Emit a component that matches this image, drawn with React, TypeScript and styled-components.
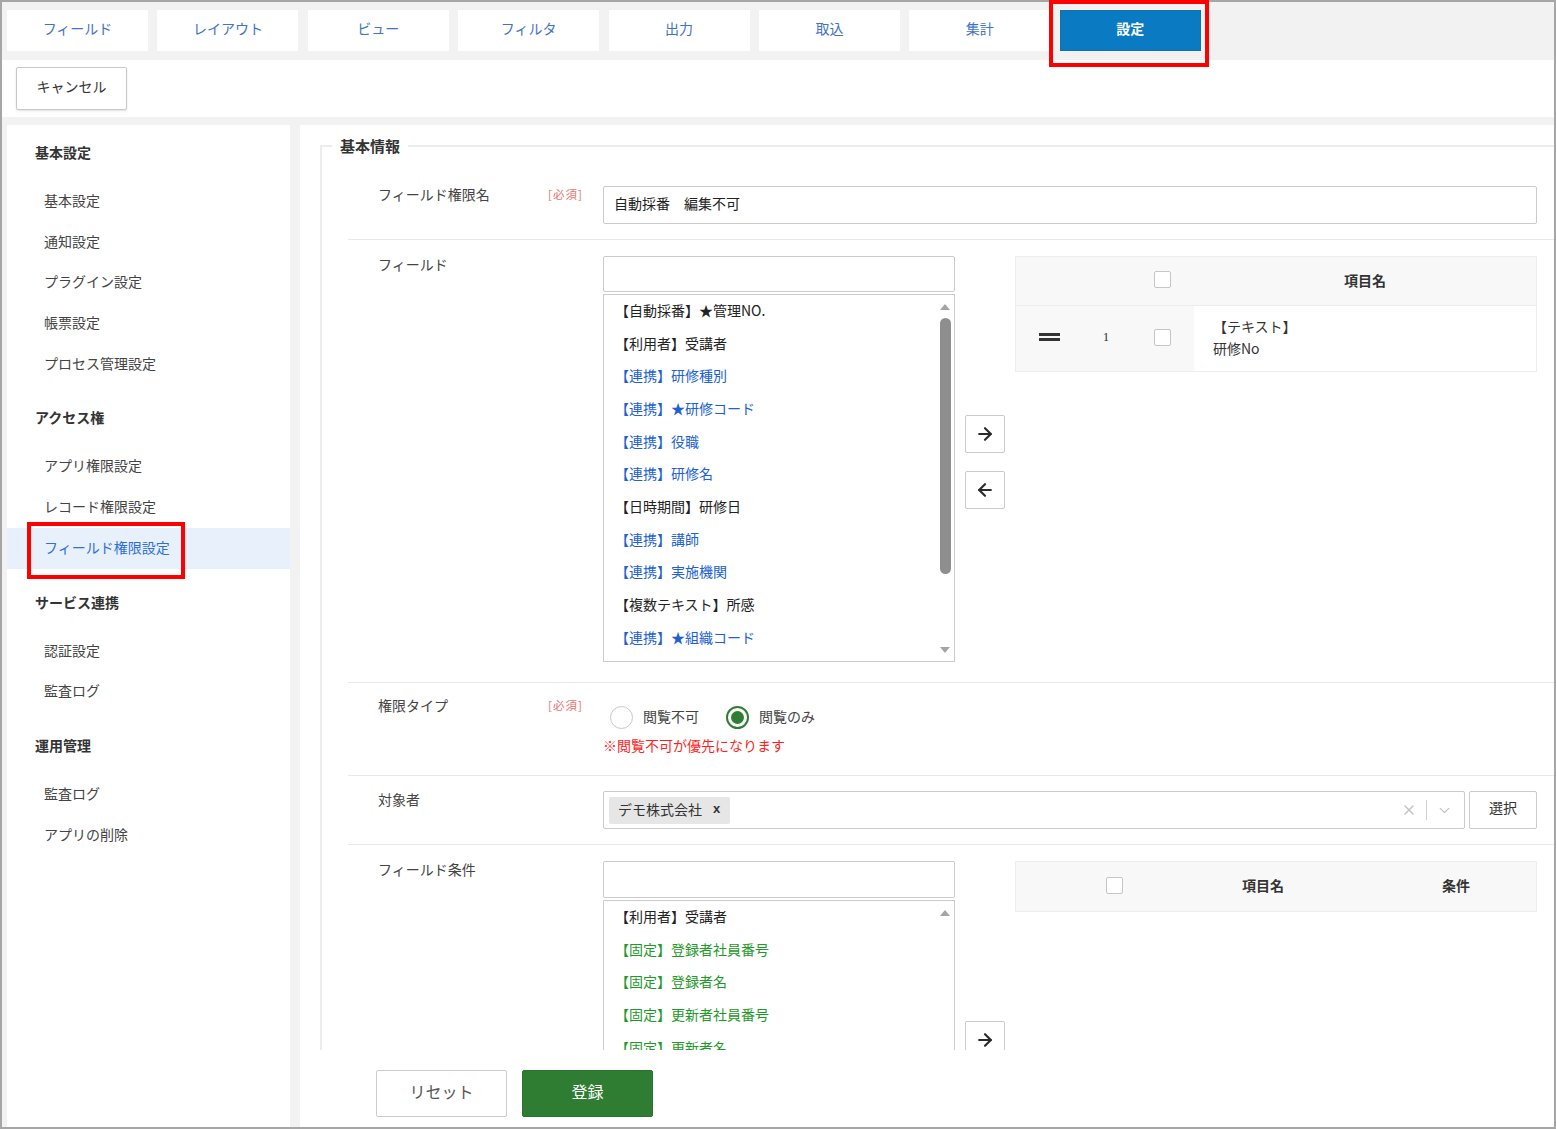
import React from "react";
import styled, { createGlobalStyle } from "styled-components";
import { ArrowRight, ArrowLeft, X, ChevronDown } from "lucide-react";

const GlobalStyle = createGlobalStyle`
  html, body {
    margin: 0;
    padding: 0;
    background: #fff;
    overflow: hidden;
  }
  body {
    font-family: "Noto Sans CJK JP", "Noto Sans", sans-serif;
    font-size: 14px;
    color: #333;
  }
  * {
    box-sizing: border-box;
  }
`;

const Frame = styled.div`
  width: 1556px;
  height: 1129px;
  border: 2px solid #a6a6a6;
  background: #f2f2f2;
  display: flex;
  flex-direction: column;
  position: relative;
`;

/* ---------- top tabs ---------- */

const TabBar = styled.nav`
  height: 58px;
  flex-shrink: 0;
  display: flex;
  align-items: flex-start;
  gap: 9.4px;
  padding: 8px 5px 0;
`;

const Tab = styled.div<{ $active?: boolean }>`
  position: relative;
  width: 141px;
  height: 41px;
  display: flex;
  align-items: center;
  justify-content: center;
  padding-bottom: 6px;
  font-size: 14px;
  background: ${(p) => (p.$active ? "#0a7ac2" : "#fff")};
  color: ${(p) => (p.$active ? "#fff" : "#3f73c6")};
  font-weight: ${(p) => (p.$active ? 700 : 400)};
  border: 1px solid ${(p) => (p.$active ? "#1770ad" : "#fff")};
`;

const TabMark = styled.span`
  position: absolute;
  left: -12px;
  top: -11px;
  width: 160px;
  height: 67px;
  border: 4px solid #ff0000;
  pointer-events: none;
`;

const ActionBar = styled.div`
  height: 57px;
  flex-shrink: 0;
  background: #fff;
  padding: 7px 0 0 14px;
`;

const CancelButton = styled.button`
  width: 111px;
  height: 43px;
  padding: 0 0 5px;
  border: 1px solid #c9c9c9;
  border-radius: 2px;
  background: #fff;
  font-family: inherit;
  font-size: 14px;
  color: #333;
  box-shadow: 0 1px 2px rgba(0, 0, 0, 0.12);
`;

/* ---------- body ---------- */

const Body = styled.div`
  flex: 1;
  min-height: 0;
  display: flex;
  gap: 10px;
  padding: 8px 0 0 5px;
`;

const Sidebar = styled.aside`
  width: 283px;
  flex-shrink: 0;
  background: #fff;
  padding-top: 7px;
`;

const SideGroup = styled.section`
  margin-bottom: 13px;
`;

const SideHeading = styled.h3`
  margin: 0 0 9px;
  height: 40px;
  line-height: 40px;
  padding-left: 28px;
  font-size: 14px;
  font-weight: 700;
  color: #333;
`;

const SideItem = styled.div<{ $active?: boolean }>`
  position: relative;
  height: 40.7px;
  line-height: 39px;
  padding-left: 37px;
  font-size: 14px;
  color: ${(p) => (p.$active ? "#2f6fd8" : "#444")};
  background: ${(p) => (p.$active ? "#e8f0fc" : "transparent")};
`;

const SideMark = styled.span`
  position: absolute;
  left: 20px;
  top: -6px;
  width: 158px;
  height: 57px;
  border: 4px solid #ff0000;
  pointer-events: none;
`;

const Main = styled.main`
  flex: 1;
  min-width: 0;
  background: #fff;
  display: flex;
  flex-direction: column;
`;

const Scroll = styled.div`
  height: 925px;
  flex-shrink: 0;
  overflow: hidden;
  padding: 11px 0 0 20px;
`;

const Fieldset = styled.fieldset`
  margin: 0;
  padding: 0;
  min-width: 0;
  border: 2px solid #ececec;
  border-right: none;
  border-bottom: none;
`;

const Legend = styled.legend`
  margin-left: 10px;
  padding: 0 8px;
  font-size: 15px;
  line-height: 20px;
  font-weight: 700;
  color: #333;
`;

const Rows = styled.div`
  padding-top: 14px;
`;

const Row = styled.div<{ $pt?: number; $pb?: number }>`
  display: grid;
  grid-template-columns: 170px 55px 1fr;
  margin-left: 26px;
  padding: ${(p) => p.$pt ?? 16}px 17px ${(p) => p.$pb ?? 15}px 30px;
  border-bottom: 1px solid #e8e8e8;
`;

const Label = styled.div`
  margin-top: -2px;
  line-height: 20px;
  font-size: 14px;
  color: #444;
`;

const Required = styled.div`
  margin-top: -2px;
  line-height: 20px;
  font-size: 11.5px;
  letter-spacing: 1px;
  color: #e27575;
`;

const Control = styled.div`
  min-width: 0;
`;

const TextInput = styled.div`
  height: 38px;
  border: 1px solid #cbcbcb;
  border-radius: 2px;
  display: flex;
  align-items: center;
  padding: 0 0 4px 10px;
  font-size: 14px;
  color: #222;
`;

/* ---------- transfer list ---------- */

const Transfer = styled.div`
  display: flex;
  align-items: stretch;
`;

const Picker = styled.div`
  width: 352px;
  flex-shrink: 0;
  display: flex;
  flex-direction: column;
  gap: 2px;
`;

const SearchBox = styled.div<{ $h?: number }>`
  height: ${(p) => p.$h ?? 36}px;
  border: 1px solid #cbcbcb;
  border-radius: 2px;
`;

const ListBox = styled.div`
  height: 368px;
  border: 1px solid #cbcbcb;
  display: flex;
`;

const ListItems = styled.ul`
  flex: 1;
  margin: 0;
  padding: 0 0 0 11px;
  list-style: none;
  overflow: hidden;
`;

const toneColor: Record<string, string> = {
  plain: "#222",
  link: "#2060d2",
  fixed: "#1e9a2a",
};

const ListItem = styled.li<{ $tone: string }>`
  height: 32.7px;
  display: flex;
  align-items: center;
  padding-bottom: 3px;
  white-space: nowrap;
  font-size: 14px;
  color: ${(p) => toneColor[p.$tone]};
`;

const Track = styled.div`
  width: 18px;
  display: flex;
  flex-direction: column;
  align-items: center;
  padding: 9px 0 8px;
`;

const TriUp = styled.span`
  width: 0;
  height: 0;
  border-left: 5.5px solid transparent;
  border-right: 5.5px solid transparent;
  border-bottom: 6px solid #a5a5a5;
`;

const TriDown = styled.span`
  margin-top: auto;
  width: 0;
  height: 0;
  border-left: 5.5px solid transparent;
  border-right: 5.5px solid transparent;
  border-top: 6px solid #a5a5a5;
`;

const Thumb = styled.span<{ $top: number }>`
  margin-top: ${(p) => p.$top}px;
  width: 11px;
  height: 256px;
  border-radius: 6px;
  background: #8e8e8e;
`;

const Shuttle = styled.div`
  width: 40px;
  margin-left: 10px;
  flex-shrink: 0;
  display: flex;
  flex-direction: column;
  justify-content: center;
  gap: 18px;
  padding-top: 6px;
`;

const ShuttleButton = styled.button`
  width: 40px;
  height: 38px;
  border: 1px solid #cbcbcb;
  border-radius: 2px;
  background: #fff;
  display: flex;
  align-items: center;
  justify-content: center;
  padding: 0;
  color: #2b2b2b;
`;

const Grid = styled.div`
  flex: 1;
  margin-left: 10px;
  align-self: flex-start;
  border: 1px solid #ededed;
`;

const GridRow = styled.div<{ $cols: string; $h: number; $head?: boolean }>`
  display: grid;
  grid-template-columns: ${(p) => p.$cols};
  height: ${(p) => p.$h}px;
  background: #f8f8f8;
  font-weight: ${(p) => (p.$head ? 700 : 400)};
  & + & {
    border-top: 1px solid #ededed;
  }
`;

const Cell = styled.div<{ $white?: boolean; $left?: boolean }>`
  display: flex;
  flex-direction: column;
  align-items: ${(p) => (p.$left ? "flex-start" : "center")};
  justify-content: center;
  padding: 0 0 ${(p) => (p.$left ? "4px" : "3px")} ${(p) => (p.$left ? "19px" : "0")};
  background: ${(p) => (p.$white ? "#fff" : "transparent")};
  font-size: 14px;
  line-height: 22px;
  color: #333;
`;

const Check = styled.span`
  width: 17px;
  height: 17px;
  border: 1px solid #c6c6c6;
  border-radius: 2px;
  background: #fff;
`;

const RowNo = styled.span`
  font-family: "Liberation Serif", serif;
  font-size: 13px;
  color: #333;
`;

/* ---------- radio ---------- */

const RadioGroup = styled.div`
  display: flex;
  align-items: center;
  height: 24px;
  margin-top: 8px;
  padding-left: 7px;
`;

const RadioOption = styled.label`
  display: flex;
  align-items: center;
  gap: 10px;
  margin-right: 27px;
  font-size: 14px;
  color: #444;
  line-height: 20px;
`;

const RadioText = styled.span`
  margin-top: -3px;
`;

const RadioCircle = styled.span<{ $checked?: boolean }>`
  width: 23px;
  height: 23px;
  border-radius: 50%;
  border: ${(p) => (p.$checked ? "2px solid #2e7d32" : "1px solid #c8c8c8")};
  background: #fff;
  display: flex;
  align-items: center;
  justify-content: center;
  &::after {
    content: "";
    display: ${(p) => (p.$checked ? "block" : "none")};
    width: 13px;
    height: 13px;
    border-radius: 50%;
    background: #2e7d32;
  }
`;

const Note = styled.div`
  margin: 6px 0 2px;
  line-height: 20px;
  font-size: 14px;
  color: #ff1f1f;
`;

/* ---------- select ---------- */

const SelectRow = styled.div`
  display: flex;
  gap: 4px;
`;

const MultiSelect = styled.div`
  flex: 1;
  height: 38px;
  border: 1px solid #cbcbcb;
  border-radius: 2px;
  display: flex;
  align-items: center;
  padding: 0 11px 0 5px;
`;

const Chip = styled.span`
  height: 27px;
  display: flex;
  align-items: center;
  gap: 11px;
  padding: 0 10px 3px 9px;
  border-radius: 2px;
  background: #e6e6e6;
  font-size: 14px;
  color: #333;
`;

const ChipClose = styled.span`
  font-family: "Liberation Sans", sans-serif;
  font-size: 13px;
  font-weight: 700;
  color: #333;
`;

const Indicators = styled.div`
  margin-left: auto;
  display: flex;
  align-items: center;
  gap: 9px;
  color: #c2c2c2;
`;

const Separator = styled.span`
  width: 1px;
  height: 20px;
  background: #d0d0d0;
`;

const PlainButton = styled.button`
  width: 68px;
  height: 38px;
  padding: 0 0 6px;
  border: 1px solid #cbcbcb;
  border-radius: 2px;
  background: #fff;
  font-family: inherit;
  font-size: 14px;
  color: #333;
`;

/* ---------- footer ---------- */

const Footer = styled.div`
  flex: 1;
  display: flex;
  align-items: flex-start;
  gap: 15px;
  padding: 20px 0 0 76px;
`;

const FooterButton = styled.button<{ $primary?: boolean }>`
  width: 131px;
  height: 47px;
  padding: 0 0 5px;
  border-radius: 2px;
  font-family: inherit;
  font-size: 16px;
  border: 1px solid ${(p) => (p.$primary ? "#2a7430" : "#cccccc")};
  background: ${(p) => (p.$primary ? "#2e7d32" : "#fff")};
  color: ${(p) => (p.$primary ? "#fff" : "#555")};
`;

/* ---------- data ---------- */

const tabs = ["フィールド", "レイアウト", "ビュー", "フィルタ", "出力", "取込", "集計", "設定"];

const groups = [
  { title: "基本設定", items: ["基本設定", "通知設定", "プラグイン設定", "帳票設定", "プロセス管理設定"] },
  { title: "アクセス権", items: ["アプリ権限設定", "レコード権限設定", "フィールド権限設定"] },
  { title: "サービス連携", items: ["認証設定", "監査ログ"] },
  { title: "運用管理", items: ["監査ログ", "アプリの削除"] },
];

const fieldItems: [string, string][] = [
  ["【自動採番】★管理NO.", "plain"],
  ["【利用者】受講者", "plain"],
  ["【連携】研修種別", "link"],
  ["【連携】★研修コード", "link"],
  ["【連携】役職", "link"],
  ["【連携】研修名", "link"],
  ["【日時期間】研修日", "plain"],
  ["【連携】講師", "link"],
  ["【連携】実施機関", "link"],
  ["【複数テキスト】所感", "plain"],
  ["【連携】★組織コード", "link"],
];

const conditionItems: [string, string][] = [
  ["【利用者】受講者", "plain"],
  ["【固定】登録者社員番号", "fixed"],
  ["【固定】登録者名", "fixed"],
  ["【固定】更新者社員番号", "fixed"],
  ["【固定】更新者名", "fixed"],
];

const HandleIcon = () => (
  <svg width="21" height="10" viewBox="0 0 21 10">
    <rect x="0" y="1" width="21" height="3" fill="#333" />
    <rect x="0" y="6" width="21" height="3" fill="#333" />
  </svg>
);

const PickList = ({
  items,
  searchHeight,
  thumbTop,
}: {
  items: [string, string][];
  searchHeight?: number;
  thumbTop: number;
}) => (
  <Picker>
    <SearchBox $h={searchHeight} />
    <ListBox>
      <ListItems>
        {items.map(([text, tone]) => (
          <ListItem key={text} $tone={tone}>
            {text}
          </ListItem>
        ))}
      </ListItems>
      <Track>
        <TriUp />
        <Thumb $top={thumbTop} />
        <TriDown />
      </Track>
    </ListBox>
  </Picker>
);

const App: React.FC = () => {
  return (
    <>
      <GlobalStyle />
      <Frame>
        <TabBar>
          {tabs.map((t) => (
            <Tab key={t} $active={t === "設定"}>
              {t}
              {t === "設定" && <TabMark />}
            </Tab>
          ))}
        </TabBar>

        <ActionBar>
          <CancelButton>キャンセル</CancelButton>
        </ActionBar>

        <Body>
          <Sidebar>
            {groups.map((g) => (
              <SideGroup key={g.title}>
                <SideHeading>{g.title}</SideHeading>
                {g.items.map((item) => {
                  const active = item === "フィールド権限設定";
                  return (
                    <SideItem key={item} $active={active}>
                      {item}
                      {active && <SideMark />}
                    </SideItem>
                  );
                })}
              </SideGroup>
            ))}
          </Sidebar>

          <Main>
            <Scroll>
              <Fieldset>
                <Legend>基本情報</Legend>
                <Rows>
                  <Row>
                    <Label>フィールド権限名</Label>
                    <Required>[必須]</Required>
                    <Control>
                      <TextInput>自動採番　編集不可</TextInput>
                    </Control>
                  </Row>

                  <Row $pb={20}>
                    <Label>フィールド</Label>
                    <div />
                    <Control>
                      <Transfer>
                        <PickList items={fieldItems} thumbTop={8} />
                        <Shuttle>
                          <ShuttleButton>
                            <ArrowRight size={20} strokeWidth={2.6} />
                          </ShuttleButton>
                          <ShuttleButton>
                            <ArrowLeft size={20} strokeWidth={2.6} />
                          </ShuttleButton>
                        </Shuttle>
                        <Grid>
                          <GridRow $cols="66px 48px 64px 1fr" $h={48} $head>
                            <Cell />
                            <Cell />
                            <Cell>
                              <Check />
                            </Cell>
                            <Cell>項目名</Cell>
                          </GridRow>
                          <GridRow $cols="66px 48px 64px 1fr" $h={66}>
                            <Cell>
                              <HandleIcon />
                            </Cell>
                            <Cell>
                              <RowNo>1</RowNo>
                            </Cell>
                            <Cell>
                              <Check />
                            </Cell>
                            <Cell $white $left>
                              <span>【テキスト】</span>
                              <span>研修No</span>
                            </Cell>
                          </GridRow>
                        </Grid>
                      </Transfer>
                    </Control>
                  </Row>

                  <Row $pt={14} $pb={18}>
                    <Label>権限タイプ</Label>
                    <Required>[必須]</Required>
                    <Control>
                      <RadioGroup>
                        <RadioOption>
                          <RadioCircle />
                          <RadioText>閲覧不可</RadioText>
                        </RadioOption>
                        <RadioOption>
                          <RadioCircle $checked />
                          <RadioText>閲覧のみ</RadioText>
                        </RadioOption>
                      </RadioGroup>
                      <Note>※閲覧不可が優先になります</Note>
                    </Control>
                  </Row>

                  <Row $pt={15} $pb={15}>
                    <Label>対象者</Label>
                    <div />
                    <Control>
                      <SelectRow>
                        <MultiSelect>
                          <Chip>
                            デモ株式会社
                            <ChipClose>x</ChipClose>
                          </Chip>
                          <Indicators>
                            <X size={16} strokeWidth={2} />
                            <Separator />
                            <ChevronDown size={17} strokeWidth={1.8} />
                          </Indicators>
                        </MultiSelect>
                        <PlainButton>選択</PlainButton>
                      </SelectRow>
                    </Control>
                  </Row>

                  <Row $pt={16}>
                    <Label>フィールド条件</Label>
                    <div />
                    <Control>
                      <Transfer>
                        <PickList items={conditionItems} searchHeight={37} thumbTop={170} />
                        <Shuttle>
                          <ShuttleButton>
                            <ArrowRight size={20} strokeWidth={2.6} />
                          </ShuttleButton>
                          <ShuttleButton>
                            <ArrowLeft size={20} strokeWidth={2.6} />
                          </ShuttleButton>
                        </Shuttle>
                        <Grid>
                          <GridRow $cols="196px 102px 1fr 160px" $h={49} $head>
                            <Cell>
                              <Check />
                            </Cell>
                            <Cell>項目名</Cell>
                            <Cell />
                            <Cell>条件</Cell>
                          </GridRow>
                        </Grid>
                      </Transfer>
                    </Control>
                  </Row>
                </Rows>
              </Fieldset>
            </Scroll>

            <Footer>
              <FooterButton>リセット</FooterButton>
              <FooterButton $primary>登録</FooterButton>
            </Footer>
          </Main>
        </Body>
      </Frame>
    </>
  );
};

export default App;
